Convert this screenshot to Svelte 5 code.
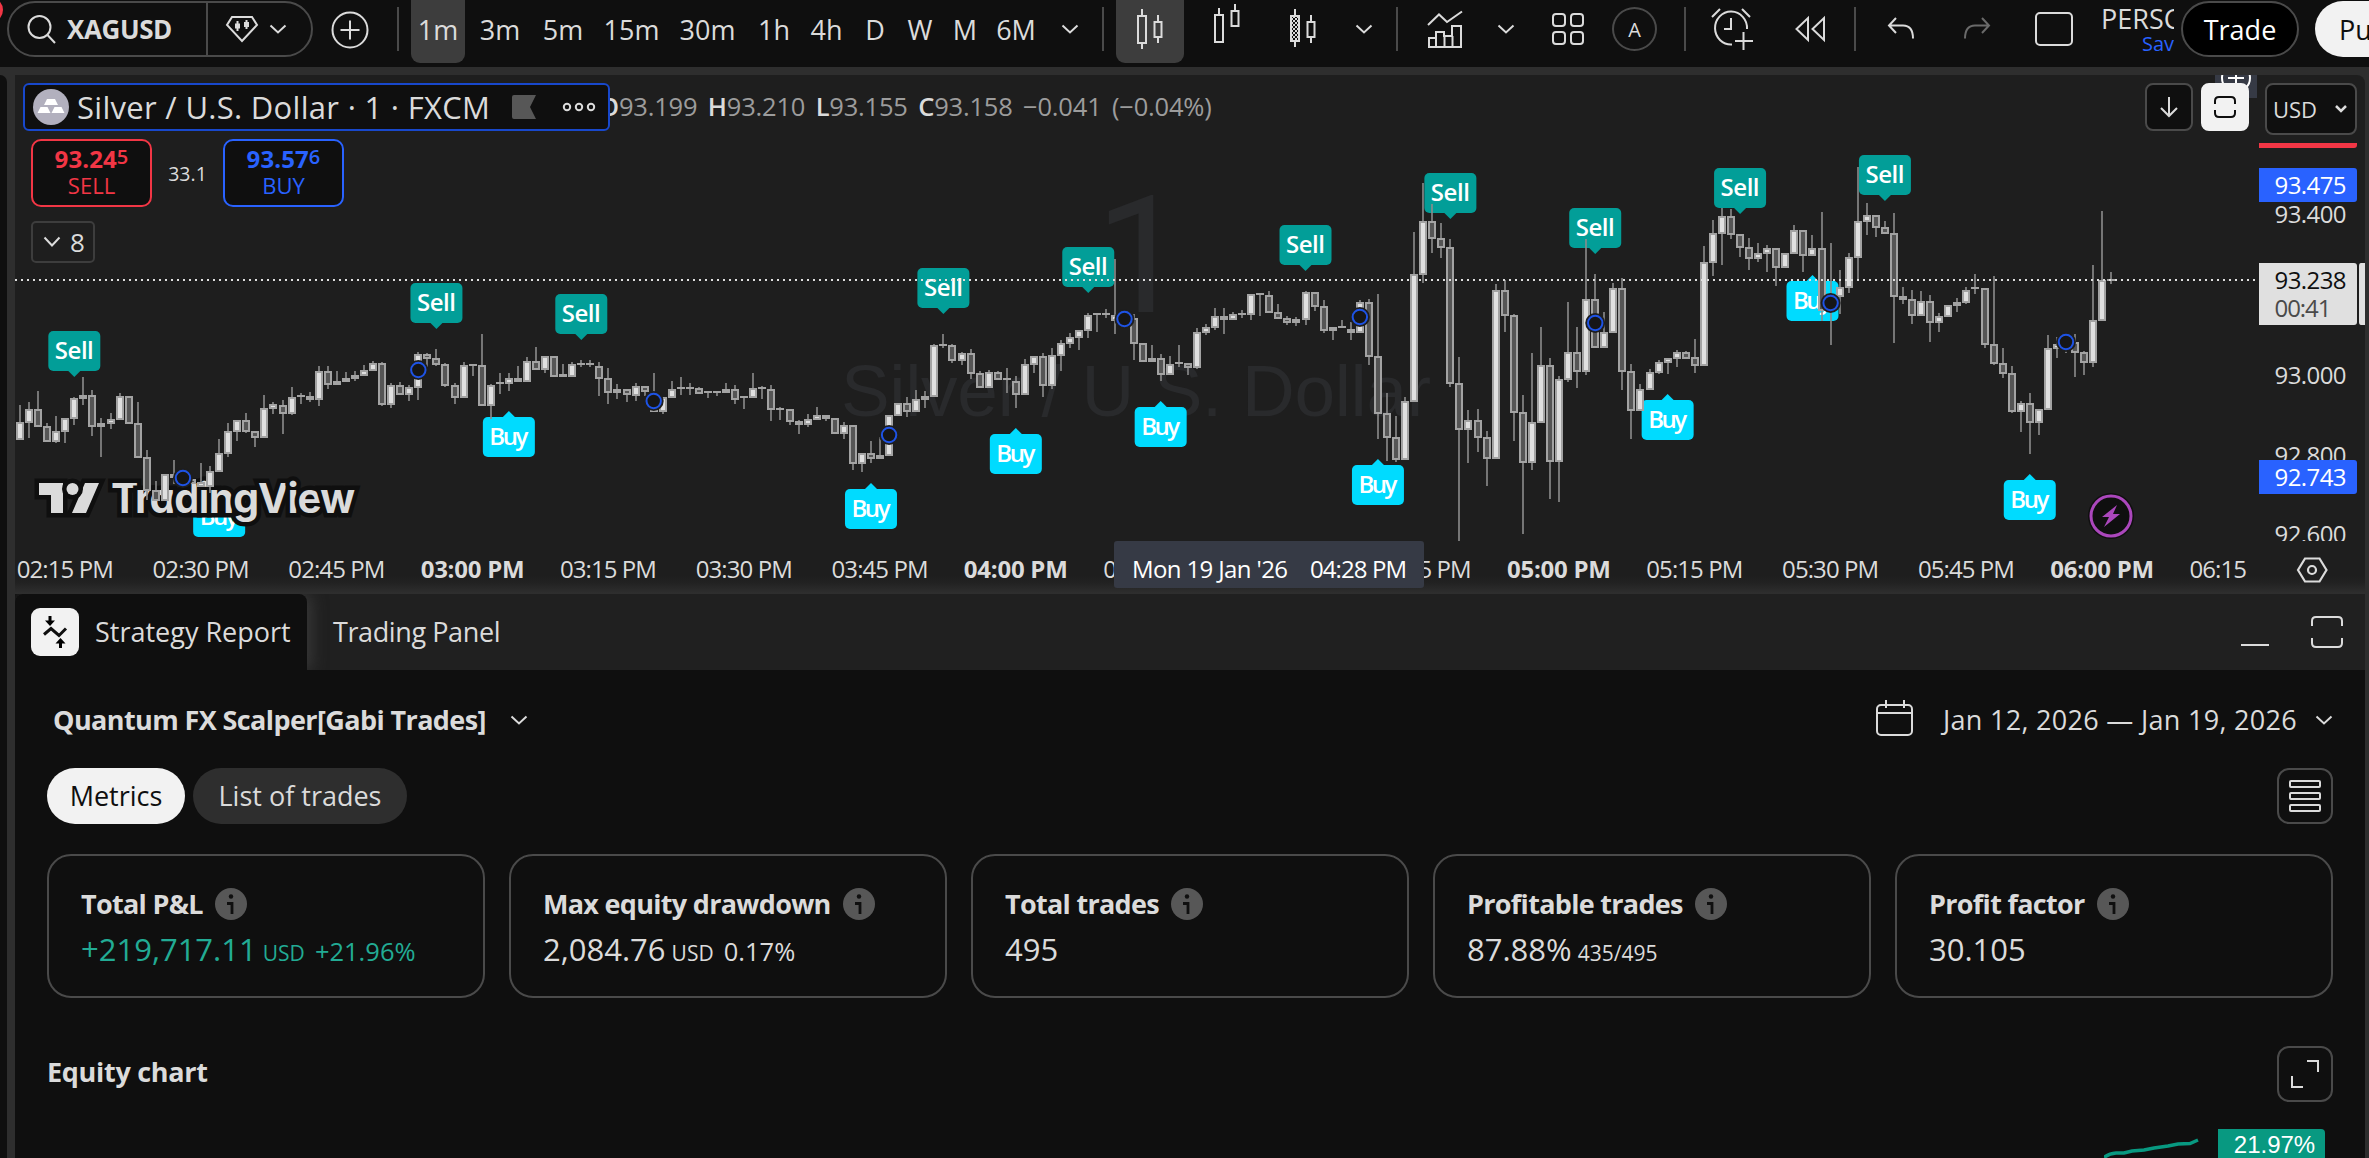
<script lang="ts">
  interface Candle {
    x: number;
    high: number;
    top: number;
    bottom: number;
    low: number;
    up: boolean;
  }

  interface Tool {
    icon: string;
    width: number;
    gap?: number;
    active?: boolean;
  }

  const STEP = 9.053;
  const FIRST_X = 20;
  const xAt = (i: number) => FIRST_X + i * STEP;

  const intervals = [
    { label: "1m", width: 54, active: true },
    { label: "3m", width: 70 },
    { label: "5m", width: 56 },
    { label: "15m", width: 81 },
    { label: "30m", width: 71 },
    { label: "1h", width: 62 },
    { label: "4h", width: 43 },
    { label: "D", width: 54 },
    { label: "W", width: 36 },
    { label: "M", width: 54 },
    { label: "6M", width: 48 },
  ];

  const tools: Tool[] = [
    { icon: "chevron", width: 60 },
    { icon: "divider", width: 2, gap: 2 },
    { icon: "candles", width: 68, gap: 12, active: true },
    { icon: "hollow", width: 30, gap: 28 },
    { icon: "volume", width: 30, gap: 47 },
    { icon: "chevron", width: 18, gap: 36 },
    { icon: "divider", width: 2, gap: 23 },
    { icon: "indicators", width: 36, gap: 29 },
    { icon: "chevron", width: 18, gap: 34 },
    { icon: "grid", width: 34, gap: 36 },
    { icon: "auto", width: 45, gap: 27 },
    { icon: "divider", width: 2, gap: 27 },
    { icon: "alarm", width: 42, gap: 25 },
    { icon: "rewind", width: 32, gap: 41 },
    { icon: "divider", width: 2, gap: 28 },
    { icon: "undo", width: 28, gap: 31 },
    { icon: "redo", width: 28, gap: 48 },
    { icon: "square", width: 40, gap: 43 },
  ];

  // high,top,bottom,low,direction (u = up, d = down), one entry per minute
  const raw = `
405,422,440,440,u 402,409,423,438,u 391,409,427,427,d 423,426,442,442,d 416,431,442,443,u 418,418,432,443,u
397,398,419,425,u 377,395,399,405,d 390,395,427,436,d 418,423,427,457,d 413,419,424,429,u 393,396,420,420,u
396,396,424,424,d 402,423,458,458,d 450,457,491,500,d 481,490,501,501,d 474,474,501,501,u 460,474,478,484,u
474,474,484,484,d 479,479,484,484,d 463,482,487,487,u 466,471,487,493,u 439,453,472,472,u 423,431,454,457,u
420,420,432,441,u 413,420,432,433,d 431,431,438,447,d 395,408,438,438,u 402,404,409,414,u 400,405,414,434,d
387,397,414,415,u 393,395,397,404,d 392,396,400,402,d 366,371,400,406,u 366,371,385,389,d 371,381,385,385,u
372,378,382,382,u 371,375,379,381,u 365,370,376,376,u 361,363,371,371,u 362,363,405,406,d 383,385,405,408,u
382,385,395,395,d 385,387,395,401,u 352,354,388,400,u 353,354,359,367,d 349,358,365,366,d 363,364,386,387,d
383,385,398,404,d 362,365,398,398,u 364,364,366,376,d 334,365,406,406,d 384,385,406,419,u 373,382,384,394,u
373,378,384,391,u 366,378,382,382,d 357,361,382,382,u 347,361,370,370,d 356,356,370,373,u 356,356,377,377,d
364,374,377,377,u 362,364,377,377,u 360,363,365,367,u 360,363,365,367,u 362,366,379,396,d 368,378,393,404,d
384,389,393,399,d 389,389,395,402,d 383,386,396,401,u 386,386,392,396,d 373,392,412,412,d 397,397,412,414,u
381,389,398,398,u 377,387,389,395,d 383,387,389,395,d 387,388,394,394,d 391,391,393,398,d 391,391,393,396,d
383,389,393,393,d 385,389,400,404,d 396,396,398,409,d 373,388,398,398,u 386,387,389,399,d 385,389,410,421,d
407,408,410,420,d 409,409,422,425,d 420,421,425,434,d 414,419,425,427,u 407,415,420,420,u 415,415,419,421,d
418,418,434,434,d 422,425,434,439,u 425,425,464,470,d 453,453,464,472,u 441,453,459,463,d 437,455,459,459,d
415,415,456,456,u 403,403,416,416,u 397,403,412,417,d 390,399,412,412,u 391,396,400,408,d 344,345,397,397,u
334,344,346,348,d 344,345,361,363,d 352,353,361,365,u 349,353,374,379,d 371,373,388,388,d 370,372,388,388,u
371,372,380,380,d 368,378,380,393,d 376,381,395,408,d 359,364,395,395,u 356,356,365,373,u 353,356,386,397,d
348,355,386,389,u 340,343,356,371,u 333,337,344,348,u 330,330,338,350,u 313,315,331,338,u 313,313,315,332,d
309,313,315,318,d 259,315,321,334,u 315,315,320,322,d 314,318,344,360,d 343,343,362,362,d 345,358,362,362,d
354,358,375,381,d 356,364,375,375,u 345,362,364,367,d 363,363,368,375,d 328,332,368,369,u 324,327,333,335,u
308,316,328,330,u 308,316,320,334,d 312,314,320,320,u 310,313,315,318,d 294,294,315,320,u 293,293,295,316,d
291,295,313,313,d 304,312,319,319,d 316,318,323,325,d 317,319,323,326,d 291,292,320,325,u 292,292,307,311,d
300,306,331,333,d 327,327,331,340,d 320,326,328,328,d 322,329,333,340,d 300,302,333,333,u 299,302,357,365,d
294,356,414,439,d 393,413,438,461,d 416,437,460,462,d 397,401,460,460,u 232,274,402,402,u 183,221,275,283,u
204,221,239,253,d 223,238,248,258,d 239,247,384,387,d 357,383,430,541,d 410,420,430,463,u 409,420,438,452,d
431,437,459,486,d 284,290,459,459,u 280,290,316,332,d 314,315,413,441,d 395,412,463,534,d 353,422,463,470,u
327,365,423,423,u 358,365,462,499,d 376,379,462,502,u 302,352,380,382,u 327,352,372,388,d 239,299,372,375,u
274,299,348,348,d 312,332,348,348,u 283,288,333,333,u 278,288,372,390,d 364,371,411,439,d 384,389,411,411,u
369,372,390,390,u 360,362,373,374,u 358,358,363,374,u 350,352,359,367,u 351,352,359,359,d 339,357,366,373,d
246,262,366,366,u 220,233,263,276,u 208,216,234,265,u 209,216,235,239,d 234,234,248,257,d 238,247,259,270,d
243,253,259,262,u 245,248,254,272,u 248,248,268,286,d 253,253,268,268,u 225,230,254,254,u 230,230,256,272,d
235,248,256,256,u 212,248,311,321,d 243,297,312,345,u 270,287,297,314,u 253,257,288,293,u 167,221,258,280,u
203,215,222,235,u 215,215,228,237,d 221,227,234,234,d 213,233,297,343,d 287,296,300,304,d 290,299,316,324,d
291,301,316,316,u 295,301,323,342,d 313,316,323,332,u 305,305,317,317,u 298,302,306,312,d 287,290,303,304,u
274,287,289,294,d 288,288,345,348,d 276,344,364,365,d 348,363,374,378,d 366,373,412,413,d 401,403,412,432,u
393,403,423,454,d 409,409,423,435,u 335,348,410,410,u 337,344,349,358,u 338,342,347,353,d 334,342,353,377,d
351,352,363,375,d 265,320,363,367,u 211,280,321,321,u 272,279,281,284,d`;

  const candles: Candle[] = raw
    .trim()
    .split(/\s+/)
    .map((row, i) => {
      const [high, top, bottom, low, dir] = row.split(",");
      return { x: Math.round(xAt(i)), high: +high, top: +top, bottom: +bottom, low: +low, up: dir === "u" };
    });

  const sells = [
    [6, 331], [46, 283], [62, 294], [102, 268], [118, 247],
    [142, 225], [158, 173], [174, 208], [190, 168], [206, 155],
  ];
  const buys = [
    [22, 497], [54, 417], [94, 489], [110, 434], [126, 407],
    [150, 465], [182, 400], [198, 281], [222, 480],
  ];
  const dots = [
    [18, 478], [44, 370], [70, 401], [96, 435], [122, 319],
    [148, 317], [174, 323], [200, 303], [226, 342],
  ];

  const times = [
    "02:15 PM", "02:30 PM", "02:45 PM", "03:00 PM", "03:15 PM", "03:30 PM", "03:45 PM", "04:00 PM", "04:15 PM",
    "04:30 PM", "04:45 PM", "05:00 PM", "05:15 PM", "05:30 PM", "05:45 PM", "06:00 PM", "06:15 PM",
  ];

  const prices = [
    { label: "93.400", y: 223 },
    { label: "93.000", y: 384 },
    { label: "92.800", y: 464 },
    { label: "92.600", y: 543 },
  ];

  const ohlc = [
    { key: "O", value: "93.199" },
    { key: "H", value: "93.210" },
    { key: "L", value: "93.155" },
    { key: "C", value: "93.158" },
  ];

  const cards = [
    { label: "Total P&L", value: "+219,717.11", unit: "USD", extra: "+21.96%", gain: true },
    { label: "Max equity drawdown", value: "2,084.76", unit: "USD", extra: "0.17%" },
    { label: "Total trades", value: "495" },
    { label: "Profitable trades", value: "87.88%", unit: "435/495" },
    { label: "Profit factor", value: "30.105" },
  ];
</script>

{#snippet icon(name: string)}
  {#if name === "chevron"}
    <svg class="ico" width="18" height="10"><path d="M1.5 1.5 9 8.5l7.5-7" /></svg>
  {:else if name === "candles"}
    <svg class="ico" width="30" height="42">
      <path d="M3 8h8v27H3zM7 1v7M7 35v6M19.500 14h7v15h-7zM23 7v7M23 29v6" />
    </svg>
  {:else if name === "hollow"}
    <svg class="ico lift" width="30" height="40">
      <path d="M3 11h8v27H3zM7 4v7M19.500 7h7v15h-7zM23 0v7" />
    </svg>
  {:else if name === "volume"}
    <svg class="ico" width="30" height="42">
      <defs>
        <pattern id="check" width="4" height="4" patternUnits="userSpaceOnUse">
          <path d="M0 0h2v2H0zM2 2h2v2H2z" fill="#dbdbdb" stroke="none" />
        </pattern>
      </defs>
      <path d="M2 8h8v25H2z" fill="url(#check)" />
      <path d="M6 1v7M6 33v6M18.500 14h7v15h-7zM22 7v7M22 29v6" />
    </svg>
  {:else if name === "indicators"}
    <svg class="ico" width="36" height="38">
      <path d="M1 15 12 4.500l8 7.500L35 1.500M2 37v-9h7v-6h8v4h8V16h9v21zM9 28v9M17.500 26v11M25.500 26v11" />
    </svg>
  {:else if name === "grid"}
    <svg class="ico" width="34" height="34">
      <rect x="2" y="2" width="12" height="12" rx="3" /><rect x="20" y="2" width="12" height="12" rx="3" />
      <rect x="2" y="20" width="12" height="12" rx="3" /><rect x="20" y="20" width="12" height="12" rx="3" />
    </svg>
  {:else if name === "alarm"}
    <svg class="ico" width="42" height="42">
      <path d="M21 36.500A16 16.500 0 1 1 36 21M20 10v11h-7M1 9l8-8M39 9l-8-8M24 33h18M32.500 24v18" />
    </svg>
  {:else if name === "rewind"}
    <svg class="ico" width="32" height="28"><path d="M14 3v22L2.500 14zM30 3v22L18.500 14z" /></svg>
  {:else if name === "undo"}
    <svg class="ico" width="28" height="24"><path d="M9 1 2 8.500 9 16M2 8.500h14q10 0 10 13" /></svg>
  {:else if name === "redo"}
    <svg class="ico dim" width="28" height="24"><path d="m19 1 7 7.500-7 7.500M26 8.500H12q-10 0-10 13" /></svg>
  {:else if name === "square"}
    <svg class="ico" width="40" height="36"><rect x="2" y="2" width="36" height="32" rx="4" /></svg>
  {:else if name === "auto"}
    <span class="auto">A</span>
  {:else if name === "divider"}
    <span class="rule"></span>
  {/if}
{/snippet}

<div class="app">
  <header class="toolbar">
    <span class="alert"></span>
    <div class="symbol">
      <div class="search">
        <svg class="ico" width="30" height="30"><circle cx="12.500" cy="13" r="11" /><path d="m20.500 21 7.500 8" /></svg>
        <b>XAGUSD</b>
      </div>
      <div class="gem">
        <svg class="ico" width="34" height="28">
          <path d="M7 2h20l5 8-15 16L2 10z" />
          <path d="M12.500 6v10M21.500 5v9" />
          <path class="solid" d="M10 8.500h5v5h-5zM19 7h5v5h-5z" />
        </svg>
        {@render icon("chevron")}
      </div>
    </div>
    <svg class="ico add" width="38" height="40">
      <circle cx="19" cy="20" r="17.500" /><path d="M9.500 20h19M19 10.500v19" />
    </svg>
    <span class="rule"></span>
    <nav class="intervals">
      {#each intervals as item}
        <button type="button" class:active={item.active} style:width="{item.width}px">{item.label}</button>
      {/each}
    </nav>
    <div class="tools">
      {#each tools as tool}
        <span
          class="tool"
          class:active={tool.active}
          style:width="{tool.width}px"
          style:margin-left="{tool.gap ?? 0}px">{@render icon(tool.icon)}</span>
      {/each}
    </div>
    <div class="layout-name"><span>PERSC</span><em>Sav</em></div>
    <button type="button" class="trade">Trade</button>
    <button type="button" class="publish">Pu</button>
  </header>

  <div class="workspace">
    <aside></aside>
    <main>
      <section class="chart">
        <svg class="plot" width="2350" height="519" viewBox="15 75 2350 519">
          <defs>
            <clipPath id="time-clip"><rect x="15" y="541" width="2237" height="50" /></clipPath>
            <clipPath id="price-clip"><rect x="2259" y="75" width="106" height="466" /></clipPath>
          </defs>

          <g class="watermark">
            <text class="big" x="1141" y="312" text-anchor="middle">1</text>
            <text x="841" y="416" font-size="73" textLength="590">Silver / U.S. Dollar</text>
          </g>

          {#each sells as [i, y]}
            <g transform="translate({xAt(i)} {y})">
              <rect class="sell" x="-26" width="52" height="40" rx="5" />
              <path class="sell" d="M-6 40h12l-6 6z" />
              <text class="tag" y="28" textLength="39" x="-19.500">Sell</text>
            </g>
          {/each}
          {#each buys as [i, y]}
            <g transform="translate({xAt(i)} {y})">
              <rect class="buy" x="-26" width="52" height="40" rx="5" />
              <path class="buy" d="M-6 0h12l-6-6z" />
              <text class="tag" y="28" textLength="39" x="-19.500">Buy</text>
            </g>
          {/each}

          <g class="brand">
            <path d="M39 483h24v30H51v-18H39zM85 483h14l-13 30H72z" />
            <circle cx="72.500" cy="489" r="6" />
            <text x="111" y="513" textLength="244">TradingView</text>
          </g>

          {#each candles as c}
            <path class="wick" d="M{c.x} {c.high}V{c.low}" />
            <rect class="edge" x={c.x - 4} y={c.top} width="8" height={c.bottom - c.top} />
            {#if c.bottom - c.top > 4}
              <rect class={c.up ? "up" : "down"} x={c.x - 2} y={c.top + 2} width="4" height={c.bottom - c.top - 4} />
            {/if}
          {/each}

          {#each dots as [i, y]}
            <circle cx={xAt(i)} cy={y} r="10" fill="#1e1e1e" />
            <circle class="dot" cx={xAt(i)} cy={y} r="7.200" />
          {/each}

          <path class="last-line" d="M15 280H2257" />

          <circle cx="2111" cy="516" r="23" fill="#0f0f0f" />
          <circle class="event" cx="2111" cy="516" r="20" />
          <path fill="#ab47bc" d="m2117 505-15 12h7l-5 10 16-13h-7z" />

          <g class="axis" clip-path="url(#time-clip)">
            {#each times as time, k}
              {@const hour = time.slice(3, 5) === "00"}
              <text
                class:hour
                x={xAt(5 + 15 * k) - (hour ? 52 : 48.5)}
                y="578"
                textLength={hour ? 104 : 97}>{time}</text>
            {/each}
          </g>
          <rect x="1114" y="541" width="310" height="47" rx="3" fill="#363a45" />
          <text class="cross" x="1132" y="578" textLength="156">Mon 19 Jan '26</text>
          <text class="cross" x="1310" y="578" textLength="97">04:28 PM</text>

          <g class="axis" clip-path="url(#price-clip)">
            {#each prices as p}
              <text x="2274.500" y={p.y} textLength="72">{p.label}</text>
            {/each}
          </g>
          <path fill="#f23645" d="M2259 143h98v2q0 3-3 3h-95z" />
          <path class="pin" d="M2259 168h95q3 0 3 3v28q0 3-3 3h-95zM2259 460h95q3 0 3 3v28q0 3-3 3h-95z" />
          <text class="cross" x="2274.500" y="193.500" textLength="72">93.475</text>
          <text class="cross" x="2274.500" y="486" textLength="72">92.743</text>
          <path fill="#e0e0e0" d="M2259 263h95q3 0 3 3v56q0 3-3 3h-95zM2361 263h4v62h-4q-2 0-2-3v-56q0-3 2-3z" />
          <text class="now" x="2274.500" y="288.500" textLength="72">93.238</text>
          <text class="count" x="2274.500" y="316.500" textLength="57">00:41</text>

          <g class="gear">
            <path d="M2305 558.500h14.500l7 11.500-7 11.500H2305l-7-11.500z" />
            <circle cx="2312" cy="570" r="4" />
          </g>
        </svg>

        <div class="overlay">
          <div class="top-line">
            <div class="legend">
              <svg width="36" height="36">
                <circle cx="18" cy="18" r="18" fill="#b2b0be" />
                <path fill="#fff" d="M14 10h8l3 6H11zM7.500 18h7l3 6h-13zM21.500 18h7l3 6h-13z" />
              </svg>
              <span class="name">Silver / U.S. Dollar · 1 · FXCM</span>
              <svg class="flag" width="24" height="24"><path fill="#575757" d="M0 2q0-2 2-2h22l-6 12 6 12H2q-2 0-2-2z" /></svg>
              <svg class="ico" width="34" height="10">
                <circle cx="5" cy="5" r="3.200" /><circle cx="17" cy="5" r="3.200" /><circle cx="29" cy="5" r="3.200" />
              </svg>
            </div>
            <div class="ohlc">
              {#each ohlc as o}
                <span><b>{o.key}</b>{o.value}</span>
              {/each}
              <span>−0.041</span>
              <span>(−0.04%)</span>
            </div>
            <div class="corner">
              <svg class="add-price" width="42" height="23" viewBox="0 0 42 23">
                <path class="plate" d="M0 0h42v23H0z" />
                <circle cx="21" cy="3" r="14" /><path d="M13 3h16M21 -6v18" />
              </svg>
              <span class="square">
                <svg class="ico" width="20" height="22"><path d="M10 1v19M2 12l8 8 8-8" /></svg>
              </span>
              <span class="square light">
                <svg width="24" height="24"><path d="M2 9V6q0-4 4-4h12q4 0 4 4v3M2 15v3q0 4 4 4h12q4 0 4-4v-3" /></svg>
              </span>
              <span class="currency">USD <svg width="14" height="10"><path d="m2 2 5 5 5-5" /></svg></span>
            </div>
          </div>
          <div class="quotes">
            <div class="quote ask"><b>93.24<sup>5</sup></b><span>SELL</span></div>
            <span class="spread">33.1</span>
            <div class="quote bid"><b>93.57<sup>6</sup></b><span>BUY</span></div>
          </div>
          <div class="collapse">
            <svg class="ico" width="18" height="12"><path d="m1.500 1.500 7.500 8 7.500-8" /></svg>8
          </div>
        </div>
      </section>

      <section class="panel">
        <div class="tabs">
          <div class="tab active">
            <span class="badge">
              <svg width="28" height="34">
                <path class="line" d="m3 19.500 7-6 8 7 7-7" />
                <path d="M7.500 1h3v4.500H14l-5 5.500-5-5.500h3.500zM18 33h3v-4.500h3.500l-5-5.500-5 5.500H18z" />
              </svg>
            </span>
            <span class="caption">Strategy Report</span>
          </div>
          <div class="tab"><span class="caption tight">Trading Panel</span></div>
          <div class="window">
            <svg class="ico" width="28" height="34"><path d="M0 30h28" /></svg>
            <svg class="ico" width="32" height="34">
              <path d="M1 11V6q0-4 4-4h22q4 0 4 4v5M1 23v5q0 4 4 4h22q4 0 4-4v-5" />
            </svg>
          </div>
        </div>

        <div class="report">
          <div class="row title">
            <b>Quantum FX Scalper[Gabi Trades]</b>
            {@render icon("chevron")}
            <svg class="ico calendar" width="38" height="38">
              <rect x="1" y="6" width="35" height="30" rx="4" /><path d="M1 14h35M10 1v8M28 1v8" />
            </svg>
            <span class="dates">Jan 12, 2026 — Jan 19, 2026</span>
            {@render icon("chevron")}
          </div>
          <div class="row">
            <button type="button" class="chip on">Metrics</button>
            <button type="button" class="chip">List of trades</button>
            <span class="boxed">
              <svg class="ico" width="34" height="34">
                <rect x="2" y="2" width="30" height="6" rx="1" /><rect x="2" y="14" width="30" height="6" rx="1" />
                <rect x="2" y="26" width="30" height="6" rx="1" />
              </svg>
            </span>
          </div>
          <div class="cards">
            {#each cards as card}
              <div class="card">
                <div class="label">
                  <span>{card.label}</span>
                  <svg width="32" height="32">
                    <circle cx="16" cy="16" r="16" fill="#575757" />
                    <circle cx="16" cy="8.500" r="2.200" fill="#0f0f0f" />
                    <path d="M12 15.500h5V26" fill="none" stroke="#0f0f0f" stroke-width="2.800" />
                  </svg>
                </div>
                <div class="value" class:gain={card.gain}>
                  {card.value}
                  {#if card.unit}<small>{card.unit}</small>{/if}
                  {#if card.extra}<span class="extra">{card.extra}</span>{/if}
                </div>
              </div>
            {/each}
          </div>
          <div class="row equity">
            <b>Equity chart</b>
            <span class="boxed">
              <svg class="ico" width="30" height="30"><path d="M17 2h11v11M2 17v11h11" /></svg>
            </span>
          </div>
          <div class="equity-plot">
            <svg width="96" height="29"><path d="M0 28.500q5-4 12-4.500h8l8-2 12-1 10-2 14-2 10-2 12-.5 8-3.500" /></svg>
            <span>21.97%</span>
          </div>
        </div>
      </section>
    </main>
  </div>
</div>

<style>
  :global(body) {
    margin: 0;
    background: #2e2e2e;
  }
  .app {
    width: 2369px;
    height: 1158px;
    overflow: hidden;
    display: flex;
    flex-direction: column;
    gap: 8px;
    color: #dbdbdb;
    font-family: "Trebuchet MS", "Open Sans", "Noto Sans", sans-serif;
    font-size: 27px;
    font-weight: 450;
    font-stretch: 88%;
    white-space: nowrap;
  }
  button {
    font: inherit;
    font-stretch: inherit;
    color: inherit;
    background: none;
    border: 0;
    padding: 0;
    white-space: nowrap;
  }
  b {
    font-weight: 700;
  }
  svg {
    display: block;
    flex: none;
  }
  .ico {
    fill: none;
    stroke: #dbdbdb;
    stroke-width: 2;
  }
  .ico .solid {
    fill: #dbdbdb;
    stroke: none;
  }
  .ico.dim {
    stroke: #6a6a6a;
  }
  .rule {
    width: 2px;
    height: 44px;
    background: #4a4a4a;
    flex: none;
  }

  .toolbar {
    position: relative;
    flex: none;
    height: 67px;
    padding-left: 7px;
    display: flex;
    align-items: flex-start;
    background: #0f0f0f;
    overflow: hidden;
  }
  .alert {
    position: absolute;
    left: -23px;
    top: -3px;
    width: 26px;
    height: 26px;
    border-radius: 50%;
    background: #f23645;
  }
  .symbol {
    flex: none;
    box-sizing: border-box;
    width: 306px;
    height: 56px;
    margin-top: 1px;
    display: flex;
    border: 2px solid #4a4a4a;
    border-radius: 28px;
    background: #0f0f0f;
  }
  .search {
    display: flex;
    align-items: center;
    gap: 10px;
    width: 179px;
    padding-left: 18px;
    border-right: 2px solid #4a4a4a;
  }
  .search b {
    font-size: 26px;
    letter-spacing: -0.4px;
  }
  .gem {
    display: flex;
    align-items: center;
    gap: 10px;
    padding-left: 17px;
  }
  .add {
    margin: 10px 28px 0 18px;
  }
  .toolbar > .rule {
    margin: 7px 12px 0 0;
  }
  .intervals,
  .tools {
    display: flex;
    flex: none;
    height: 63px;
  }
  .intervals button {
    padding-bottom: 5px;
    flex: none;
  }
  .intervals .active,
  .tool.active {
    background: #3d3d3d;
    border-radius: 0 0 9px 9px;
  }
  .tool {
    flex: none;
    box-sizing: border-box;
    display: flex;
    justify-content: center;
    align-items: center;
    padding-bottom: 5px;
  }
  .lift {
    margin-top: -10px;
  }
  .auto {
    flex: none;
    box-sizing: border-box;
    width: 45px;
    height: 44px;
    border: 2px solid #4a4a4a;
    border-radius: 50%;
    text-align: center;
    font-size: 20px;
    line-height: 42px;
  }
  .layout-name {
    flex: none;
    width: 73px;
    margin-left: 27px;
    overflow: hidden;
    text-align: right;
    display: flex;
    flex-direction: column;
    line-height: 1;
    padding-top: 5px;
  }
  .layout-name em {
    font-style: normal;
    font-size: 20px;
    line-height: 24px;
    color: #2962ff;
  }
  .trade,
  .publish {
    flex: none;
    box-sizing: border-box;
    height: 56px;
    margin: 1px 0 0 7px;
    width: 118px;
    border: 2px solid #4a4a4a;
    border-radius: 28px;
    background: #000;
    color: #fff;
  }
  .publish {
    width: 150px;
    margin-left: 16px;
    padding-left: 24px;
    text-align: left;
    border: 0;
    background: #f2f2f2;
    color: #0f0f0f;
  }

  .workspace {
    flex: 1;
    display: flex;
    gap: 8px;
  }
  aside {
    width: 7px;
    background: #0f0f0f;
    border-radius: 0 8px 0 0;
  }
  main {
    width: 2350px;
    display: flex;
    flex-direction: column;
  }
  .chart {
    position: relative;
    height: 519px;
    background: linear-gradient(#1e1e1e 500px, #222 508px, #2e2e2e 518px);
    border-radius: 0 8px 0 0;
    overflow: hidden;
  }
  .watermark {
    fill: #292a2c;
    font-family: "Liberation Sans", sans-serif;
  }
  .watermark .big {
    font-family: Roboto, sans-serif;
    font-size: 163px;
    font-weight: 400;
    font-stretch: 100%;
  }
  .sell {
    fill: #029e98;
  }
  .buy {
    fill: #00dbff;
  }
  .tag {
    font-size: 24px;
    font-weight: 550;
    fill: #fff;
  }
  .brand {
    fill: #dbdbdb;
    stroke: #0f0f0f;
    stroke-width: 9px;
    stroke-linejoin: miter;
    paint-order: stroke;
  }
  .brand text {
    font-family: Inter, sans-serif;
    font-weight: 700;
    font-size: 41px;
    font-feature-settings: "cv11";
  }
  .wick {
    stroke: #8c8c8c;
    stroke-width: 1.600;
  }
  .edge {
    fill: #a3a3a3;
  }
  .up {
    fill: #e0e0e0;
  }
  .down {
    fill: #555;
  }
  .dot {
    fill: #161616;
    stroke: #1e53e5;
    stroke-width: 2;
  }
  .last-line {
    stroke: #e0e0e0;
    stroke-width: 2;
    stroke-dasharray: 2 4;
  }
  .event {
    fill: #0f0f0f;
    stroke: #ab47bc;
    stroke-width: 3;
  }
  .axis text,
  .cross,
  .now,
  .count {
    font-size: 24px;
    fill: #dbdbdb;
  }
  .axis .hour {
    font-weight: 700;
  }
  .cross {
    fill: #fff;
  }
  .now {
    fill: #0f0f0f;
  }
  .count {
    fill: #4a4a4a;
  }
  .pin {
    fill: #2962ff;
  }
  .gear {
    fill: none;
    stroke: #dbdbdb;
    stroke-width: 2.200;
  }

  .overlay {
    position: absolute;
    inset: 0;
    padding: 8px 8px 0;
  }
  .top-line {
    display: flex;
    height: 48px;
  }
  .legend {
    flex: none;
    box-sizing: border-box;
    width: 587px;
    height: 48px;
    display: flex;
    align-items: center;
    padding-left: 8px;
    border: 2px solid #1848cc;
    border-radius: 6px;
    background: #0f0f0f;
    position: relative;
    z-index: 1;
  }
  .name {
    width: 435px;
    margin-left: 8px;
    font-size: 31px;
    line-height: 40px;
    letter-spacing: 0.3px;
    padding-bottom: 1px;
  }
  .flag {
    margin-right: 26px;
  }
  .ohlc {
    display: flex;
    gap: 10.5px;
    margin-left: -11px;
    font-size: 25.5px;
    line-height: 46px;
    letter-spacing: -0.2px;
    color: #9c9c9c;
  }
  .ohlc b {
    color: #dbdbdb;
    font-weight: 550;
  }
  .corner {
    position: relative;
    display: flex;
    gap: 8px;
    margin-left: auto;
  }
  .add-price {
    position: absolute;
    left: 70px;
    top: -8px;
    fill: none;
    stroke: #fff;
    stroke-width: 2;
  }
  .add-price .plate {
    fill: #363a45;
    stroke: none;
  }
  .square {
    position: relative;
    box-sizing: border-box;
    width: 48px;
    height: 48px;
    display: grid;
    place-items: center;
    border: 2px solid #4a4a4a;
    border-radius: 8px;
    background: #0f0f0f;
  }
  .square.light {
    background: #f2f2f2;
    border-color: #f2f2f2;
  }
  .light svg {
    fill: none;
    stroke: #0f0f0f;
    stroke-width: 2;
  }
  .currency {
    box-sizing: border-box;
    width: 92px;
    height: 52px;
    margin-left: 8px;
    padding: 0 7px 0 6px;
    display: flex;
    align-items: center;
    justify-content: space-between;
    border: 2px solid #4a4a4a;
    border-radius: 8px;
    background: #0f0f0f;
    font-size: 22px;
  }
  .currency svg {
    fill: none;
    stroke: #dbdbdb;
    stroke-width: 2.500;
  }
  .quotes {
    display: flex;
    align-items: center;
    margin: 8px 0 0 8px;
  }
  .quote {
    box-sizing: border-box;
    width: 121px;
    height: 68px;
    padding-top: 4px;
    display: flex;
    flex-direction: column;
    align-items: center;
    border: 2px solid #f23645;
    border-radius: 10px;
    background: #0f0f0f;
    color: #f23645;
    font-size: 22px;
    line-height: 27px;
  }
  .quote b {
    font-size: 24px;
    letter-spacing: 0.1px;
  }
  .quote sup {
    font-size: 20px;
    font-weight: 600;
    line-height: 0;
    vertical-align: 4px;
  }
  .quote.bid {
    border-color: #2962ff;
    color: #2962ff;
  }
  .spread {
    width: 71px;
    text-align: center;
    font-size: 19.5px;
    font-weight: 500;
  }
  .collapse {
    box-sizing: border-box;
    width: 64px;
    height: 42px;
    margin: 14px 0 0 8px;
    padding: 0 0 1px 10px;
    display: flex;
    align-items: center;
    gap: 9px;
    border: 2px solid #3d3d3d;
    border-radius: 5px;
    font-size: 26px;
  }

  .panel {
    flex: 1;
    background: #0f0f0f;
  }
  .tabs {
    display: flex;
    height: 76px;
    background: #202020;
    border-radius: 8px 0 0 0;
  }
  .tab {
    display: flex;
    align-items: center;
    padding-left: 26px;
  }
  .caption {
    padding-bottom: 2px;
  }
  .caption.tight {
    letter-spacing: -0.4px;
  }
  .tab.active {
    box-sizing: border-box;
    width: 292px;
    padding-left: 16px;
    gap: 16px;
    background: #0f0f0f;
    border-radius: 8px 8px 0 0;
    box-shadow: 4px 0 16px #3a3a3a;
    clip-path: inset(0 -24px 0 0);
  }
  .badge {
    flex: none;
    width: 48px;
    height: 48px;
    display: grid;
    place-items: center;
    border-radius: 9px;
    background: #f2f2f2;
  }
  .badge .line {
    fill: none;
    stroke: #0f0f0f;
    stroke-width: 3;
  }
  .window {
    margin-left: auto;
    display: flex;
    align-items: center;
    gap: 42px;
    padding-right: 22px;
  }
  .report {
    padding: 22px 32px 0;
  }
  .row {
    display: flex;
    align-items: center;
    gap: 8px;
  }
  .title {
    height: 56px;
    padding-left: 6px;
    margin-bottom: 20px;
    gap: 18px;
  }
  .title b,
  .dates {
    padding-bottom: 2px;
  }
  .title b {
    width: 439px;
    letter-spacing: -0.6px;
  }
  .dates {
    letter-spacing: 0.3px;
  }
  .calendar {
    margin: -4px 11px 0 auto;
  }
  .chip {
    height: 56px;
    width: 138px;
    padding-bottom: 1px;
    border-radius: 28px;
    background: #2e2e2e;
  }
  .chip + .chip {
    width: 214px;
  }
  .chip.on {
    background: #f2f2f2;
    color: #0f0f0f;
  }
  .boxed {
    box-sizing: border-box;
    width: 56px;
    height: 56px;
    margin-left: auto;
    display: grid;
    place-items: center;
    border: 2px solid #4a4a4a;
    border-radius: 12px;
  }
  .cards {
    display: grid;
    grid-template-columns: repeat(5, 438px);
    gap: 24px;
    margin-top: 30px;
  }
  .card {
    box-sizing: border-box;
    height: 144px;
    padding: 29px 32px 0;
    border: 2px solid #4a4a4a;
    border-radius: 24px;
  }
  .label {
    display: flex;
    align-items: center;
    gap: 12px;
    height: 38px;
    font-weight: 700;
    letter-spacing: -0.7px;
  }
  .label span {
    padding-bottom: 2px;
  }
  .value {
    font-size: 31px;
    line-height: 52px;
    word-spacing: -2px;
  }
  .value small {
    font-size: 21px;
  }
  .value .extra {
    font-size: 25.5px;
    margin-left: 4px;
  }
  .gain {
    color: #22ab94;
  }
  .equity {
    margin-top: 48px;
  }
  .equity b {
    padding-bottom: 5px;
    letter-spacing: -0.3px;
  }
  .equity-plot {
    display: flex;
    gap: 18px;
    justify-content: flex-end;
    margin-top: 27px;
    padding-right: 8px;
  }
  .equity-plot svg {
    fill: none;
    stroke: #089981;
    stroke-width: 3.500;
  }
  .equity-plot span {
    box-sizing: border-box;
    width: 107px;
    height: 40px;
    padding-left: 6px;
    text-align: center;
    border-radius: 0 4px 0 0;
    background: #089981;
    color: #fff;
    font-family: "Liberation Sans", sans-serif;
    font-size: 24px;
    line-height: 31px;
  }
</style>
